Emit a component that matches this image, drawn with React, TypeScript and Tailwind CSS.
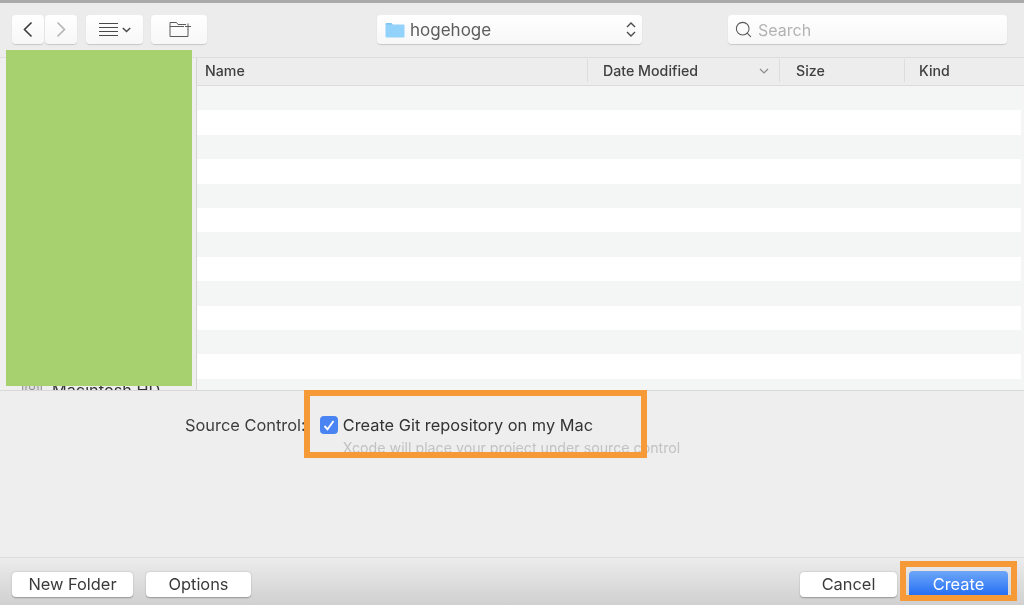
import { Search } from "lucide-react";

const rowIndexes = Array.from({ length: 13 }, (_, i) => i);

function ToolButton({ className, children }: { className: string; children: React.ReactNode }) {
  return (
    <div className={`h-[29px] rounded-[4px] bg-gradient-to-b from-[#ffffff] to-[#f7f7f7] shadow-[0_1px_1px_rgba(0,0,0,0.16)] flex items-center justify-center ${className}`}>
      {children}
    </div>
  );
}

function FooterButton({ className, children }: { className: string; children: React.ReactNode }) {
  return (
    <div className={`h-[25px] rounded-[4px] bg-white shadow-[0_0.5px_1.5px_rgba(0,0,0,0.3)] flex items-center justify-center text-[16.4px] text-[#3a3a3a] ${className}`}>
      {children}
    </div>
  );
}

function HeaderCell({ className, children }: { className: string; children: React.ReactNode }) {
  return (
    <div className={`h-[23px] flex items-center text-[14.2px] font-medium text-[#3f3f3f] ${className}`}>
      {children}
    </div>
  );
}

export default function App() {
  return (
    <div className="relative w-[1024px] h-[605px] overflow-hidden bg-[#ededed] flex flex-col blur-[0.4px] font-['Inter','Liberation_Sans',sans-serif]">
      <div className="h-[3px] bg-[#aaaaaa]" />

      {/* toolbar */}
      <div className="h-[54px] shrink-0 bg-[#ececec] flex items-start pt-[12px] pl-[12px] pr-[17px]">
        <ToolButton className="w-[32px] mr-[1px]">
          <svg width="12" height="17" viewBox="0 0 12 17" fill="none" stroke="#3c3c3c" strokeWidth="1.6">
            <path d="M9.5 1.5 L2.5 8.5 L9.5 15.5" />
          </svg>
        </ToolButton>
        <ToolButton className="w-[32px]">
          <svg width="12" height="17" viewBox="0 0 12 17" fill="none" stroke="#b4b4b4" strokeWidth="1.6">
            <path d="M2.5 1.5 L9.5 8.5 L2.5 15.5" />
          </svg>
        </ToolButton>
        <ToolButton className="w-[57px] ml-[9px] gap-[4px]">
          <svg width="19" height="15" viewBox="0 0 19 15" fill="none" stroke="#4a4a4a" strokeWidth="1">
            <path d="M0 1.5H19M0 5.5H19M0 9.5H19M0 13.5H19" />
          </svg>
          <svg width="9" height="6" viewBox="0 0 9 6" fill="none" stroke="#4a4a4a" strokeWidth="1.5">
            <path d="M0.8 1 L4.5 4.5 L8.2 1" />
          </svg>
        </ToolButton>
        <ToolButton className="w-[56px] ml-[8px]">
          <svg width="23" height="17" viewBox="0 0 23 17" fill="none" stroke="#5a5a5a" strokeWidth="1" className="ml-[3px]">
            <path d="M1 15.5V1.5H7.5L9 3.5H17M1 5.5H15M19 8V15.5H1M19 2.5V8.5M16 5.5H22" />
          </svg>
        </ToolButton>

        <ToolButton className="w-[265px] ml-[170px] justify-start pl-[8px] pr-[5px]">
          <svg width="20" height="16" viewBox="0 0 20 16" className="mr-[5px]">
            <path d="M0.5 2 a1 1 0 0 1 1-1 H6.5 L8 3 H0.5 Z" fill="#7fc3ef" />
            <rect x="0.5" y="2.5" width="19" height="13" rx="1" fill="#93d2fa" />
          </svg>
          <span className="text-[17px] text-[#5c5c5c] flex-1 leading-none mt-[1px]">hogehoge</span>
          <svg width="12" height="17" viewBox="0 0 12 17" fill="none" stroke="#4c4c4c" strokeWidth="1.4">
            <path d="M2 6 L6 2 L10 6 M2 11 L6 15 L10 11" />
          </svg>
        </ToolButton>

        <ToolButton className="w-[279px] ml-auto justify-start pl-[6px]">
          <Search size={19} strokeWidth={1.3} className="text-[#555555] mr-[5px]" />
          <span className="text-[16px] text-[#b3b3b3] leading-none">Search</span>
        </ToolButton>
      </div>

      {/* browser */}
      <div className="h-[334px] shrink-0 flex border-b border-[#d9d9d9] overflow-hidden">
        <div className="w-[197px] shrink-0 bg-[#efefef] border-r border-[#d4d4d4] border-t border-t-[#e0e0e0] flex flex-col justify-end">
          <div className="flex items-center gap-[10px] pl-[22px] -mb-[9px]">
            <svg width="20" height="18" viewBox="0 0 20 18" fill="none" stroke="#9a9a9a" strokeWidth="1.2">
              <rect x="0.6" y="0.6" width="18.8" height="16.8" rx="1.5" fill="#e2e2e2" />
              <path d="M4 0.6V17.4M16 0.6V17.4" />
              <circle cx="10" cy="6" r="2.6" />
            </svg>
            <span className="text-[16.3px] text-[#333333] leading-none">Macintosh HD</span>
          </div>
        </div>
        <div className="flex-1 flex flex-col min-w-0">
          <div className="h-[29px] shrink-0 bg-[#ededed] border-t border-b border-[#dcdcdc] flex items-center pb-[2px] pr-[3px]">
            <HeaderCell className="w-[391px] pl-[8px] border-r border-[#dddddd]">Name</HeaderCell>
            <HeaderCell className="w-[192px] pl-[15px] pr-[10px] justify-between border-r border-[#dddddd]">
              Date Modified
              <svg width="10" height="6" viewBox="0 0 10 6" fill="none" stroke="#8c8c8c" strokeWidth="1.2">
                <path d="M1 1 L5 5 L9 1" />
              </svg>
            </HeaderCell>
            <HeaderCell className="w-[125px] pl-[16px] border-r border-[#dddddd]">Size</HeaderCell>
            <HeaderCell className="flex-1 pl-[14px]">Kind</HeaderCell>
          </div>
          <div className="flex-1 flex flex-col pr-[3px] bg-[#f5f5f5]">
            {rowIndexes.map((i) => (
              <div key={i} className={`h-[24.4px] shrink-0 ${i % 2 === 0 ? "bg-[#f4f5f5]" : "bg-white"}`} />
            ))}
          </div>
        </div>
      </div>

      {/* source control options */}
      <div className="flex-1 bg-[#eeeeee] pt-[23px] pl-[185px] flex items-start">
        <span className="text-[16.4px] text-[#3d3d3d] leading-[22px] mr-[14px]">Source Control:</span>
        <div>
          <div className="flex items-center">
            <div className="w-[18px] h-[18px] rounded-[4px] bg-[#4a84f2] flex items-center justify-center mr-[5px]">
              <svg width="12" height="11" viewBox="0 0 12 11" fill="none" stroke="white" strokeWidth="1.9">
                <path d="M1.5 6 L4.5 9.3 L10.5 1" />
              </svg>
            </div>
            <span className="text-[16.35px] text-[#333333] leading-[22px]">Create Git repository on my Mac</span>
          </div>
          <div className="pl-[23px] text-[14.2px] text-[#c2c2c2] leading-[20px] mt-[2px]">
            Xcode will place your project under source control
          </div>
        </div>
      </div>

      {/* footer */}
      <div className="h-[48px] shrink-0 border-t border-[#dcdcdc] bg-gradient-to-b from-[#ececec] to-[#d0d0d0] flex items-start pt-[14px] pl-[12px] pr-[16px]">
        <FooterButton className="w-[121px] mr-[13px]">New Folder</FooterButton>
        <FooterButton className="w-[105px]">Options</FooterButton>
        <FooterButton className="w-[97px] ml-auto mr-[12px]">Cancel</FooterButton>
        <div className="w-[99px] h-[25px] -mt-[1px] pt-[2px] rounded-t-[4px] bg-gradient-to-b from-[#6ea6f7] to-[#1f6cf5] flex items-center justify-center text-[16.4px] text-white">
          Create
        </div>
      </div>

      {/* annotations laid over the dialog */}
      <div className="absolute left-[6px] top-[50px] w-[186px] h-[336px] bg-[#a7d16f]" />
      <div className="absolute left-[304px] top-[390px] w-[343px] h-[68px] border-[6px] border-[#f59a36]" />
      <div className="absolute left-[900px] top-[561px] w-[117px] h-[40px] border-[6px] border-[#f59a36]" />
    </div>
  );
}
